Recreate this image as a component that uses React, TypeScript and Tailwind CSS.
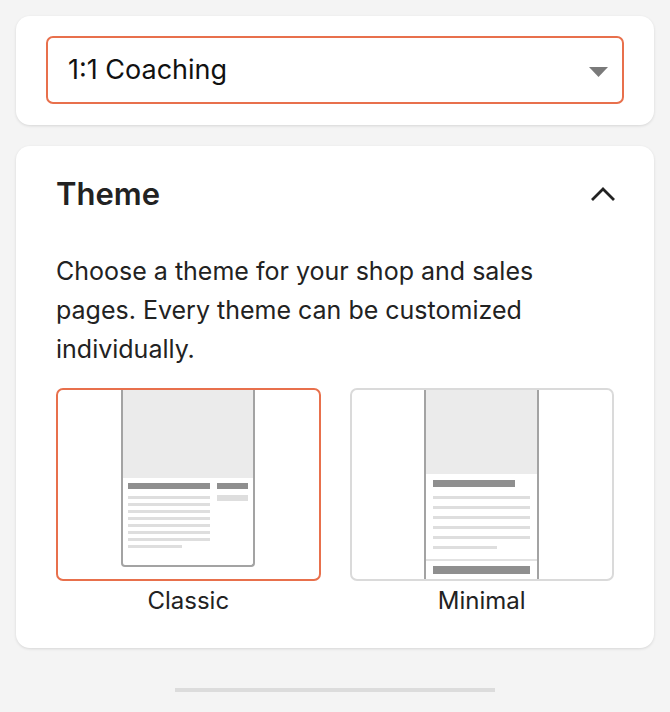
import { useState } from "react";

const ClassicPreview = () => (
  <div className="flex h-full justify-center pb-[12px]">
    <div className="flex w-[134px] flex-col rounded-b-[4px] border-x-2 border-b-2 border-[#a3a3a3] bg-white">
      <div className="h-[88px] bg-[#ebebeb]" />
      <div className="flex gap-[7px] px-[5px] pt-[5px]">
        <div className="flex w-[82px] flex-col gap-[4px]">
          <div className="mb-[3px] h-[6px] bg-[#8f8f8f]" />
          {[0, 1, 2, 3, 4, 5, 6].map((i) => (
            <div key={i} className="h-[3px] bg-[#dedede]" />
          ))}
          <div className="h-[3px] w-[54px] bg-[#dedede]" />
        </div>
        <div className="flex w-[31px] flex-col gap-[6px]">
          <div className="h-[6px] bg-[#8f8f8f]" />
          <div className="h-[6px] bg-[#dedede]" />
        </div>
      </div>
    </div>
  </div>
);

const MinimalPreview = () => (
  <div className="flex h-full justify-center">
    <div className="flex w-[115px] flex-col border-x-2 border-[#a3a3a3] bg-white">
      <div className="h-[84px] bg-[#ebebeb]" />
      <div className="flex flex-col gap-[7px] px-[7px] pt-[6px]">
        <div className="mb-[2px] h-[7px] w-[82px] bg-[#8f8f8f]" />
        {[0, 1, 2, 3, 4].map((i) => (
          <div key={i} className="h-[3px] bg-[#dedede]" />
        ))}
        <div className="h-[3px] w-[64px] bg-[#dedede]" />
      </div>
      <div className="mt-auto border-t-2 border-[#e2e2e2] px-[7px] pb-[5px] pt-[5px]">
        <div className="h-[8px] bg-[#8f8f8f]" />
      </div>
    </div>
  </div>
);

const themes = [
  { id: "classic", label: "Classic", Preview: ClassicPreview },
  { id: "minimal", label: "Minimal", Preview: MinimalPreview },
];

export default function App() {
  const [theme, setTheme] = useState("classic");
  const [open, setOpen] = useState(true);

  return (
    <div className="min-h-[712px] bg-[#f4f4f4] px-4 pt-4 text-[#222] [font-family:Inter,'Liberation_Sans',sans-serif]">
      {/* Product select */}
      <div className="rounded-[14px] bg-white px-[30px] pb-[21px] pt-[20px] shadow-[0_1px_3px_rgba(0,0,0,0.12)]">
        <div className="relative">
          <select
            defaultValue="coaching"
            className="h-[68px] w-full appearance-none rounded-[7px] border-2 border-[#e8704c] bg-white pl-[20px] text-[27px] text-[#111] outline-none"
          >
            <option value="coaching">1:1 Coaching</option>
          </select>
          <svg
            className="pointer-events-none absolute right-[16px] top-[31px]"
            width="19"
            height="10"
            viewBox="0 0 19 10"
          >
            <path d="M0 0h19L9.5 10z" fill="#7a7a7a" />
          </svg>
        </div>
      </div>

      {/* Theme section */}
      <div className="mt-[21px] rounded-[14px] bg-white px-[40px] pb-[32px] pt-[30px] shadow-[0_1px_3px_rgba(0,0,0,0.12)]">
        <button
          onClick={() => setOpen(!open)}
          className="flex w-full items-center justify-between"
        >
          <span className="text-[31px] font-semibold leading-[36px]">Theme</span>
          <svg width="26" height="16" viewBox="0 0 26 16" className="mr-[-2px]">
            <path
              d="M2 14 13 3l11 11"
              fill="none"
              stroke="#222"
              strokeWidth="2.8"
            />
          </svg>
        </button>

        {open && (
          <>
            <p className="mt-[40px] text-[25px] leading-[39px]">
              Choose a theme for your shop and sales pages. Every theme can be customized individually.
            </p>
            <div className="mt-[19px] grid grid-cols-2 gap-[29px]">
              {themes.map(({ id, label, Preview }) => (
                <button key={id} onClick={() => setTheme(id)} className="flex flex-col items-center">
                  <div
                    className={`h-[193px] w-full overflow-hidden rounded-[7px] border-2 bg-white ${
                      theme === id ? "border-[#e8704c]" : "border-[#dadada]"
                    }`}
                  >
                    <Preview />
                  </div>
                  <span className="mt-[5px] text-[24px] leading-[30px]">{label}</span>
                </button>
              ))}
            </div>
          </>
        )}
      </div>

      <div className="mx-auto mt-[40px] h-[4px] w-[320px] bg-[#dcdcdc]" />
    </div>
  );
}
